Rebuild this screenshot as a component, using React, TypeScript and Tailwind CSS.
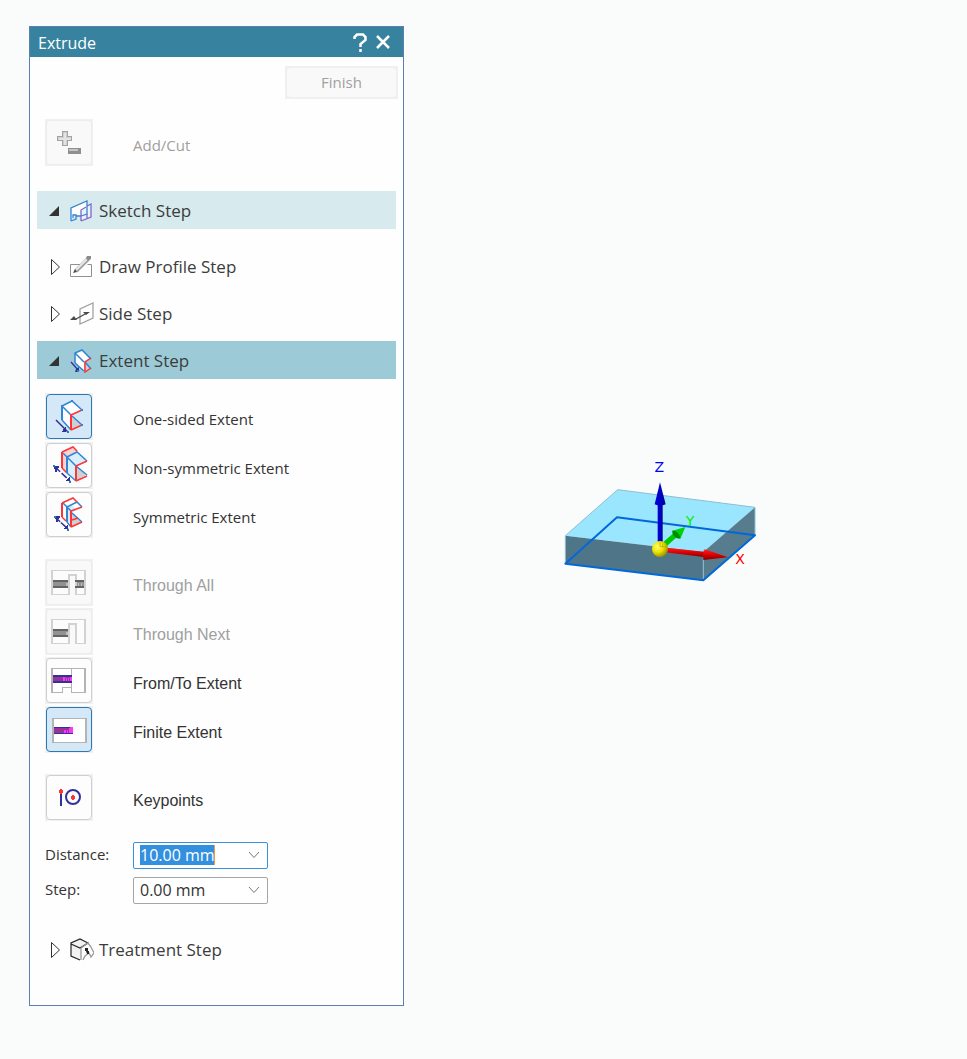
import { useEffect, useRef, type ReactNode } from "react";
import { clsx } from "clsx";

type IconProps = { children: ReactNode };

function ButtonIcon({ children }: IconProps) {
  return (
    <svg width="48" height="47" viewBox="0 0 48 47" fill="none" shapeRendering="crispEdges" aria-hidden="true" className="absolute inset-0">
      {children}
    </svg>
  );
}

function StepIcon({ children }: IconProps) {
  return (
    <svg width="24" height="24" viewBox="0 0 24 24" fill="none" aria-hidden="true" className="shrink-0">
      {children}
    </svg>
  );
}

/* Button icons */

function AddCutIcon() {
  return (
    <ButtonIcon>
      <path d="M17 12h6v5h4v5h-4v5h-6v-5h-5v-5h5z" fill="#a3a3a3" />
      <path d="M18 13h4v5h4v3h-4v5h-4v-5h-5v-3h5z" fill="#cfcfcf" />
      <path d="M19 14h2v5h5v2h-5v5h-2v-5h-5v-2h5z" fill="#e4e4e4" />
      <path d="M23 29h13v6H23z" fill="#8f8f8f" />
      <path d="M24 30h9v2h-9z" fill="#c4c4c4" />
    </ButtonIcon>
  );
}

function OneSidedIcon() {
  return (
    <ButtonIcon>
      <path d="M17 13l10-5 9 9-10 5v14l-9-9z" fill="#fff" />
      <path d="M27 23l9 8-9 5z" fill="#d0d0d0" />
      <g strokeWidth="1.500" shapeRendering="auto">
        <path d="M17 13l10-5 10 9M17 13l9 9M17 27l9 10M27 23l10 9" stroke="#3285d3" />
        <path d="M26 22l11-5M26 37l11-5" stroke="#ff3434" />
        <path d="M11 27l12 12" stroke="#31319a" />
      </g>
      <path d="M17 12v15" stroke="#3285d3" strokeWidth="2" />
      <path d="M26 21v16" stroke="#ff3434" strokeWidth="2" />
      <path d="M21 33v6h-5l2-2z" fill="#31319a" />
      <path d="M22 38h2v2h-2z" fill="#2c7cb6" />
      <path d="M26 7h2v2h-2zM16 12h2v2h-2zM36 16h2v2h-2zM36 31h2v2h-2z" fill="#3285d3" />
    </ButtonIcon>
  );
}

function NonSymmetricIcon() {
  return (
    <ButtonIcon>
      <path d="M17 10l10-5 5 5-10 5v16l-5-5z" fill="#fcd3d3" />
      <path d="M22 15l10-5 9 9-10 5v14l-9-8z" fill="#d8effc" />
      <path d="M32 25l9 8-9 5z" fill="#d0d0d0" />
      <g strokeWidth="1.500" shapeRendering="auto">
        <path d="M22 15l10-5 10 9M18 11l13 13M22 31l9 8M31 24l11 9" stroke="#3285d3" />
        <path d="M32 9l-4-4-11 5M17 26l5 5M42 19l-11 5M31 39l11-5" stroke="#ff3434" />
        <path d="M10 25l15 14" stroke="#31319a" strokeDasharray="7 2" />
      </g>
      <path d="M22 15v16" stroke="#3285d3" strokeWidth="2" />
      <path d="M17 10v16M31 24v15" stroke="#ff3434" strokeWidth="2" />
      <path d="M9 24h5v2l-2 1v3h-2zM25 34v5h-5l2-2z" fill="#31319a" />
      <path d="M8 23h2v2H8zM24 39h2v2h-2z" fill="#2c7cb6" />
    </ButtonIcon>
  );
}

function SymmetricIcon() {
  return (
    <ButtonIcon>
      <path d="M17 12l10-5 9 9-10 5v14l-9-9z" fill="#fff" />
      <path d="M22 16l5-1 5 4-5 3v13l-5-5z" fill="#d8e9f8" />
      <path d="M27 22l9 9-9 5z" fill="#d0d0d0" />
      <g strokeWidth="1.500" shapeRendering="auto">
        <path d="M22 16l10-5 5 5M18 12l8 8M22 31l4 5M27 22l10 9" stroke="#3285d3" />
        <path d="M32 11l-4-4-11 5M17 26l4 4M37 16l-11 4M26 36l11-5M27 29l6-2" stroke="#ff3434" />
        <path d="M10 26l13 12" stroke="#31319a" strokeDasharray="7 1" />
      </g>
      <path d="M22 16v15" stroke="#3285d3" strokeWidth="2" />
      <path d="M17 12v14M26 20v16" stroke="#ff3434" strokeWidth="2" />
      <path d="M10 25h5v2l-2 1v3h-2zM23 33v5h-5l2-2z" fill="#31319a" />
      <path d="M9 25h2v2H9zM22 38h2v2h-2z" fill="#2c7cb6" />
    </ButtonIcon>
  );
}

function ThroughAllIcon() {
  return (
    <ButtonIcon>
      <path d="M6 11h35v25H30V17h-5v19H6z" fill="#fcfcfc" />
      <path d="M6 11h35v25H30V17h-5v19H6zM8 12v23h15V15h9v20h7V12z" fill="#d2d2d2" fillRule="evenodd" />
      <path d="M8 21h15v2H8zM8 27h15v2H8zM30 21h9v2h-9zM30 27h9v2h-9z" fill="#646464" />
      <path d="M8 23h15v4H8zM32 23h7v4h-7z" fill="#929292" />
      <path d="M21 24h2v3h-2zM33 24h1v3h-1zM36 24h1v3h-1z" fill="#bdbdbd" />
    </ButtonIcon>
  );
}

function ThroughNextIcon() {
  return (
    <ButtonIcon>
      <path d="M6 11h35v25H30V17h-5v19H6z" fill="#fcfcfc" />
      <path d="M6 11h35v25H30V17h-5v19H6zM8 12v23h15V15h9v20h7V12z" fill="#d2d2d2" fillRule="evenodd" />
      <path d="M8 21h15v2H8zM8 27h15v2H8z" fill="#646464" />
      <path d="M8 23h15v4H8z" fill="#929292" />
      <path d="M21 24h2v3h-2z" fill="#bdbdbd" />
    </ButtonIcon>
  );
}

function FromToIcon() {
  return (
    <ButtonIcon>
      <path d="M6 11h35v25H26v-5h-8v5H6z" fill="#b4b4b4" />
      <path d="M8 12h18v18h-9v5H8zM27 12h12v23H27z" fill="#fff" />
      <path d="M26 12h1v5h-1zM26 27h1v4h-1z" fill="#b4b4b4" />
      <path d="M8 18h19v8H8z" fill="#31319a" />
      <path d="M8 20h19v4H8z" fill="#993399" />
      <path d="M18 20h2v4h-2zM21 21h1v3h-1zM23 21h1v3h-1zM25 20h2v4h-2z" fill="#ff34ff" />
    </ButtonIcon>
  );
}

function FiniteIcon() {
  return (
    <ButtonIcon>
      <path d="M7 12h35v25H7z" fill="#b4b4b4" />
      <path d="M9 13h31v23H9z" fill="#fff" />
      <path d="M9 21h19v7H9z" fill="#31319a" />
      <path d="M9 22h19v5H9z" fill="#993399" />
      <path d="M19 24h2v3h-2zM22 24h1v3h-1zM24 22h1v5h-1zM25 21h3v6h-3z" fill="#ff34ff" />
    </ButtonIcon>
  );
}

function KeypointsIcon() {
  return (
    <ButtonIcon>
      <path d="M15 19h2v13h-2z" fill="#31319a" />
      <path d="M15 15h2v1h1v3h-1v1h-2v-1h-1v-3h1z" fill="#ff3434" />
      <circle cx="28" cy="23" r="7" stroke="#31319a" strokeWidth="2" shapeRendering="auto" />
      <path d="M27 21h2v1h1v3h-1v1h-2v-1h-1v-3h1z" fill="#ff3434" />
    </ButtonIcon>
  );
}

/* Step icons */

function SketchIcon() {
  return (
    <StepIcon>
      <path d="M1 9L17 2v12l-6 3-4-1-6 4z" fill="#fff" />
      <path d="M11 11l10-5v11l-10 4z" fill="#e9f4f6" />
      <path d="M1 22V9L17 2v13l-6 2M1 22l5-2v-4H3v3M6 17h5" stroke="#3285d3" strokeWidth="1.300" />
      <path d="M11 22V11l5-3M11 22l10-4V5l-4 2M17 15v4" stroke="#8464cf" strokeWidth="1.300" />
    </StepIcon>
  );
}

function DrawProfileIcon() {
  return (
    <StepIcon>
      <path d="M10.500 9.500h-10v12h21v-12h-4" stroke="#909090" />
      <path d="M6 16L18 4" stroke="#a0a0a0" strokeWidth="4" />
      <path d="M6 15L17 4" stroke="#e9e9e9" strokeWidth="2" />
      <path d="M17 1h4v3l-3 2-2-3z" fill="#8c8c8c" />
      <path d="M3 18l2-4 2 3z" fill="#4a4a4a" />
    </StepIcon>
  );
}

function SideIcon() {
  return (
    <StepIcon>
      <path d="M10 22V7l13-6v15z" stroke="#a2a2a2" strokeWidth="1.300" fill="#fff" />
      <path d="M6 17l11-6" stroke="#4b4b4b" strokeWidth="1.300" />
      <path d="M0 18l4-4 3 4zM13 10h7l-4 3z" fill="#4b4b4b" />
    </StepIcon>
  );
}

function ExtentIcon() {
  return (
    <StepIcon>
      <path d="M5 4l7-3 8 8-6 4v9l-9-9z" fill="#fff" />
      <path d="M15 13l5 7-5 2z" fill="#d0d0d0" />
      <path d="M5 14V4l7-3 9 9M5 4l9 9M5 14l9 8M15 13l6 7" stroke="#3285d3" strokeWidth="1.500" />
      <path d="M21 9l-6 4v10l6-4" stroke="#ff3434" strokeWidth="1.500" />
      <path d="M1 13l8 9" stroke="#31319a" strokeWidth="1.300" />
      <path d="M9 18v5H5l1-3z" fill="#31319a" />
      <path d="M7 21h2v2H7z" fill="#2c7cb6" />
    </StepIcon>
  );
}

function TreatmentIcon() {
  return (
    <StepIcon>
      <path d="M1 5l9-4 8 4-7 5v12L1 18z" fill="#f2f2f2" />
      <path d="M10 22L1 18V5l9-4 8 4-8 5-9-4" stroke="#252525" strokeWidth="1.200" />
      <path d="M11 10v12M11 10l7-5 3 4 3 6-3 4-2-4-4 3-2 4" stroke="#9a9a9a" strokeWidth="1.300" />
      <path d="M15 10h3v3h1v3h-2l-1-3h-1z" fill="#252525" />
    </StepIcon>
  );
}

/* Panel parts */

type StepHeaderProps = {
  title: string;
  icon: ReactNode;
  open?: boolean;
  className?: string;
};

function StepHeader({ title, icon, open = false, className }: StepHeaderProps) {
  return (
    <button
      type="button"
      aria-expanded={open}
      className={clsx("flex h-[38px] w-full items-center pl-3 pt-px text-left text-[17px] text-[#3c3c3c]", className)}
    >
      <svg width="12" height="16" viewBox="0 0 12 16" aria-hidden="true" className="mr-[9px] shrink-0">
        {open ? (
          <path d="M0 13h10V3z" fill="#333" />
        ) : (
          <path d="M2.500 .5v15l8-7.500z" fill="#fff" stroke="#333" />
        )}
      </svg>
      {icon}
      <span className="ml-[5px]">{title}</span>
    </button>
  );
}

type OptionProps = {
  id: string;
  label: string;
  icon: ReactNode;
  selected?: boolean;
  disabled?: boolean;
  arial?: boolean;
};

function Option({ id, label, icon, selected, disabled, arial }: OptionProps) {
  return (
    <div className="flex items-center pl-2">
      <button
        id={id}
        type="button"
        disabled={disabled}
        aria-pressed={selected}
        aria-labelledby={`${id}-label`}
        className="relative h-[47px] w-12 shrink-0 bg-[#f0f0f0] p-px"
      >
        <span
          className={clsx(
            "block h-full w-full rounded border",
            disabled && "border-[#ededed] bg-[#f9f9f9]",
            selected && "border-[#2c78b4] bg-[#d5e8f7]",
            !disabled && !selected && "border-[#cfcfcf] bg-[#fdfdfd]"
          )}
        />
        {icon}
      </button>
      <label
        id={`${id}-label`}
        htmlFor={id}
        className={clsx(
          "ml-10 pt-[6px]",
          arial ? "font-['Liberation_Sans',sans-serif] text-[16px]" : "text-[15px]",
          disabled ? "text-[#a0a0a0]" : "text-[#333]"
        )}
      >
        {label}
      </label>
    </div>
  );
}

type ComboProps = {
  id: string;
  label: string;
  value: string;
  active?: boolean;
};

function Combo({ id, label, value, active }: ComboProps) {
  const input = useRef<HTMLInputElement>(null);

  useEffect(() => {
    if (active) {
      input.current?.focus();
      input.current?.select();
    }
  }, [active]);

  return (
    <div className="flex items-center pl-2">
      <label htmlFor={id} className="w-[88px] pb-[2px] text-[15px] text-[#333]">
        {label}
      </label>
      <div
        className={clsx(
          "relative flex h-[27px] w-[135px] items-center rounded-xs border bg-white pb-px pl-[6px]",
          active ? "border-[#3a91db]" : "border-[#a6a6a6]"
        )}
      >
        <input
          ref={input}
          id={id}
          type="text"
          defaultValue={value}
          className="h-5 min-w-0 flex-1 text-[16px] leading-5 text-[#333] outline-none selection:bg-[#3390df] selection:text-white"
        />
        {active && <span className="absolute left-20 h-5 w-px bg-[#f09a4a]" />}
        <button type="button" aria-label={`${label} values`} className="flex h-full w-[26px] items-center justify-center">
          <svg width="12" height="8" viewBox="0 0 12 8" fill="none" stroke="#777" aria-hidden="true">
            <path d="M1 1l5 5.500 5-5.500" />
          </svg>
        </button>
      </div>
    </div>
  );
}

function Model() {
  return (
    <svg width="220" height="150" viewBox="0 0 660 450" role="img" aria-label="Extruded block">
      <defs>
        <radialGradient id="origin" cx="35%" cy="35%" r="70%">
          <stop offset="0" stopColor="#ffff70" />
          <stop offset="0.500" stopColor="#efe400" />
          <stop offset="1" stopColor="#958c00" />
        </radialGradient>
        <linearGradient id="z" x1="0" x2="1">
          <stop offset="0" stopColor="#0000d8" />
          <stop offset="0.600" stopColor="#0000c4" />
          <stop offset="1" stopColor="#000080" />
        </linearGradient>
        <linearGradient id="x" x1="0" x2="0" y1="0" y2="1">
          <stop offset="0" stopColor="#ff2020" />
          <stop offset="0.500" stopColor="#e00000" />
          <stop offset="1" stopColor="#800000" />
        </linearGradient>
      </defs>
      {/* Block faces */}
      <path d="M46 257L203 119l412 53-155 134z" fill="#9be6ff" />
      <path d="M46 257l414 49v85L46 341z" fill="#4f7688" />
      <path d="M460 306l155-134v84L460 391z" fill="#567c8e" />
      <path d="M46 341V257L203 119l412 53v84M460 300v91" fill="none" stroke="#8cbfd4" strokeWidth="3" />
      <path d="M46 341L201 202l414 54-155 135z" fill="none" stroke="#0069d9" strokeWidth="6" strokeLinejoin="round" />
      {/* Axes */}
      <path d="M323 160h15v120h-15z" fill="url(#z)" />
      <path d="M330 97l17 66q-17 7-33 0z" fill="url(#z)" />
      <path d="M340 276l38-33 10 11-37 34z" fill="#00c800" />
      <path d="M406 231l-14 34q-10 3-18-5-8-7-7-18z" fill="#00d20a" />
      <path d="M367 242q-1 11 7 18t18 5q-2-10-9-17t-16-6z" fill="#008c00" />
      <path d="M348 293l115 12-2 16-115-14z" fill="url(#x)" />
      <path d="M464 298l70 24-74 8q-3-18 4-32z" fill="url(#x)" />
      <circle cx="330" cy="297" r="24" fill="url(#origin)" />
      <path d="M330 276v14h20M338 280v12" fill="none" stroke="#b0a600" strokeWidth="2" />
      <g className="font-['DejaVu_Sans',sans-serif] text-[42px]" textAnchor="middle">
        <text x="328" y="66" fill="#0000ff">Z</text>
        <text x="420" y="228" fill="#00f000">Y</text>
        <text x="570" y="342" fill="#ff0000">X</text>
      </g>
    </svg>
  );
}

export default function App() {
  return (
    <div className="flex min-h-screen items-start bg-[#fafcfc] font-['Open_Sans','Noto_Sans',sans-serif]">
      <section className="mb-[53px] ml-[29px] mt-[26px] w-[375px] shrink-0 border border-[#5a80b0] bg-[#fefefe]">
        {/* Title bar */}
        <header className="flex h-[30px] items-center bg-[#37839f] pl-2 pr-3 text-white">
          <h1 className="flex-1 pt-px text-[16px]">Extrude</h1>
          <button type="button" aria-label="Help" className="mr-[7px] flex h-5 w-4 items-center justify-center">
            <svg width="14" height="19" viewBox="0 0 14 19" fill="none" stroke="#fff" strokeWidth="2.500" aria-hidden="true">
              <path d="M1.500 6V4L4 1.500h6L12.500 4v3L7.500 11v3M7.500 16v3" />
            </svg>
          </button>
          <button type="button" aria-label="Close" className="flex h-5 w-4 items-center justify-center">
            <svg width="14" height="14" viewBox="0 0 14 14" fill="none" stroke="#fff" strokeWidth="2.500" aria-hidden="true">
              <path d="M1 1l12 12M13 1L1 13" />
            </svg>
          </button>
        </header>

        <div className="flex justify-end pr-[5px] pt-[9px]">
          <button type="button" disabled className="h-[33px] w-[113px] bg-[#f0f0f0] p-[2px] text-[15px] text-[#a0a0a0]">
            <span className="flex h-full items-center justify-center rounded bg-[#f9f9f9]">Finish</span>
          </button>
        </div>

        <div className="px-[7px] pb-[37px] pt-5">
          <Option id="add-cut" label="Add/Cut" icon={<AddCutIcon />} disabled />

          {/* Steps */}
          <StepHeader title="Sketch Step" icon={<SketchIcon />} open className="mt-[25px] bg-[#d7eaed]" />
          <StepHeader title="Draw Profile Step" icon={<DrawProfileIcon />} className="mt-[18px]" />
          <StepHeader title="Side Step" icon={<SideIcon />} className="mt-[9px]" />
          <StepHeader title="Extent Step" icon={<ExtentIcon />} open className="mt-[9px] bg-[#9ccbd7]" />

          <div className="mt-[14px] flex flex-col gap-[2px]">
            <Option id="one-sided" label="One-sided Extent" icon={<OneSidedIcon />} selected />
            <Option id="non-symmetric" label="Non-symmetric Extent" icon={<NonSymmetricIcon />} />
            <Option id="symmetric" label="Symmetric Extent" icon={<SymmetricIcon />} />
          </div>

          <div className="mt-[21px] flex flex-col gap-[2px]">
            <Option id="through-all" label="Through All" icon={<ThroughAllIcon />} disabled arial />
            <Option id="through-next" label="Through Next" icon={<ThroughNextIcon />} disabled arial />
            <Option id="from-to" label="From/To Extent" icon={<FromToIcon />} arial />
            <Option id="finite" label="Finite Extent" icon={<FiniteIcon />} selected arial />
          </div>

          <div className="mt-[21px]">
            <Option id="keypoints" label="Keypoints" icon={<KeypointsIcon />} arial />
          </div>

          <div className="mt-[21px] flex flex-col gap-2">
            <Combo id="distance" label="Distance:" value="10.00 mm" active />
            <Combo id="step" label="Step:" value="0.00 mm" />
          </div>

          <StepHeader title="Treatment Step" icon={<TreatmentIcon />} className="mt-[26px]" />
        </div>
      </section>

      {/* Model view */}
      <main className="flex min-h-screen flex-1 items-center justify-center pb-[10px] pr-[52px]">
        <Model />
      </main>
    </div>
  );
}
